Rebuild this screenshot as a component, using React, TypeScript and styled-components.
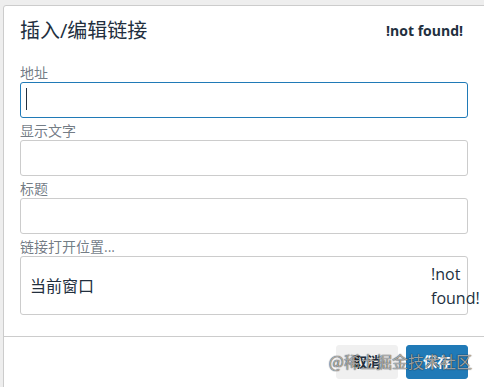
import React from "react";
import styled, { createGlobalStyle } from "styled-components";

const GlobalStyle = createGlobalStyle`
  html, body {
    margin: 0;
    padding: 0;
    background: #eeeeee;
    overflow: hidden;
  }
  body {
    font-family: "Open Sans", "Noto Sans CJK SC", sans-serif;
    color: #222f3e;
  }
`;

const Page = styled.div`
  padding: 5px 0 0 3px;
  height: 387px;
  box-sizing: border-box;
`;

const Dialog = styled.div`
  width: 482px;
  background: #fff;
  border: 1px solid #cccccc;
  border-radius: 3px 0 0 0;
  box-sizing: border-box;
  display: flex;
  flex-direction: column;
`;

const Header = styled.div`
  display: flex;
  align-items: center;
  justify-content: space-between;
  padding: 12px 16px 4px 16px;
`;

const Title = styled.h1`
  margin: 0;
  font-size: 20px;
  line-height: 26px;
  font-weight: 400;
  color: #222f3e;
`;

const CloseText = styled.span`
  font-size: 14px;
  line-height: 18px;
  font-weight: 700;
  color: #222f3e;
  margin-right: 5px;
`;

const Body = styled.div`
  display: flex;
  flex-direction: column;
  gap: 4px;
  padding: 16px 16px 21px 16px;
`;

const Group = styled.div`
  display: flex;
  flex-direction: column;
`;

const Label = styled.label`
  font-size: 14px;
  line-height: 18px;
  color: rgba(34, 47, 62, 0.65);
`;

const TextField = styled.div<{ $focused?: boolean }>`
  height: 36px;
  box-sizing: border-box;
  border: 1px solid ${(p) => (p.$focused ? "#207ab7" : "#cccccc")};
  border-radius: 3px;
  background: #fff;
  display: flex;
  align-items: center;
  padding: 0 5px;
`;

const Caret = styled.span`
  display: block;
  width: 1px;
  height: 22px;
  margin-top: -2px;
  background: #222f3e;
`;

const SelectBox = styled.div`
  height: 59px;
  box-sizing: border-box;
  border: 1px solid #cccccc;
  border-radius: 3px;
  display: flex;
  align-items: center;
`;

const SelectValue = styled.span`
  flex: 1;
  padding-left: 9px;
  font-size: 16px;
  line-height: 22px;
  color: #222f3e;
`;

const Chevron = styled.span`
  width: 36px;
  flex-shrink: 0;
  font-size: 16px;
  line-height: 24px;
  color: #222f3e;
  overflow: visible;
`;

const Footer = styled.div`
  position: relative;
  border-top: 1px solid #cccccc;
  display: flex;
  justify-content: flex-end;
  gap: 8px;
  padding: 8px 16px;
`;

const Button = styled.button<{ $primary?: boolean }>`
  height: 34px;
  padding: 0 16px;
  border-radius: 3px;
  border: 1px solid ${(p) => (p.$primary ? "#207ab7" : "#f0f0f0")};
  background: ${(p) => (p.$primary ? "#207ab7" : "#f0f0f0")};
  color: ${(p) => (p.$primary ? "#ffffff" : "#222f3e")};
  font-family: "Open Sans", "Noto Sans CJK SC", sans-serif;
  font-size: 14px;
  font-weight: 700;
  line-height: 18px;
  cursor: pointer;
`;

const Watermark = styled.span`
  position: absolute;
  right: 12px;
  top: 14px;
  font-size: 16px;
  line-height: 20px;
  font-family: "Noto Sans CJK SC", sans-serif;
  color: rgba(255, 255, 255, 0.6);
  text-shadow: 0 0 1px rgba(0, 0, 0, 0.85), 0 0 1px rgba(0, 0, 0, 0.5);
  pointer-events: none;
  white-space: nowrap;
`;

export default function App() {
  return (
    <>
      <GlobalStyle />
      <Page>
        <Dialog>
          <Header>
            <Title>插入/编辑链接</Title>
            <CloseText>!not found!</CloseText>
          </Header>
          <Body>
            <Group>
              <Label>地址</Label>
              <TextField $focused>
                <Caret />
              </TextField>
            </Group>
            <Group>
              <Label>显示文字</Label>
              <TextField />
            </Group>
            <Group>
              <Label>标题</Label>
              <TextField />
            </Group>
            <Group>
              <Label>链接打开位置...</Label>
              <SelectBox>
                <SelectValue>当前窗口</SelectValue>
                <Chevron>!not found!</Chevron>
              </SelectBox>
            </Group>
          </Body>
          <Footer>
            <Button>取消</Button>
            <Button $primary>保存</Button>
            <Watermark>@稀土掘金技术社区</Watermark>
          </Footer>
        </Dialog>
      </Page>
    </>
  );
}
